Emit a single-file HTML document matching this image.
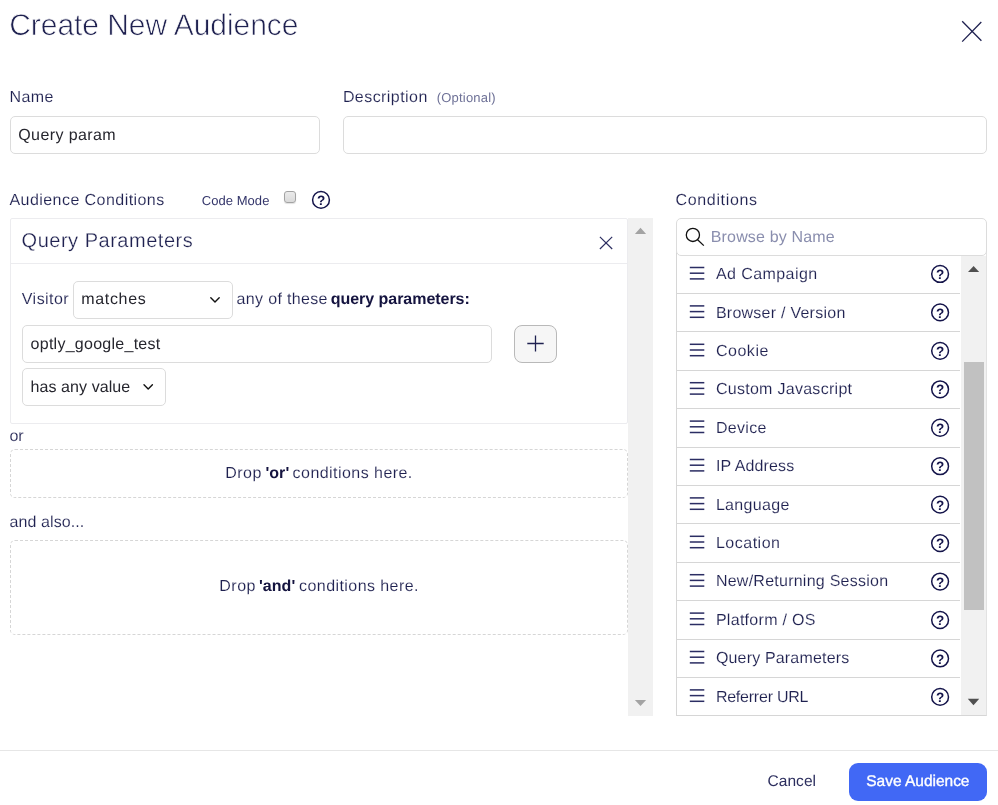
<!DOCTYPE html>
<html lang="en"><head><meta charset="utf-8"><title>Create New Audience</title>
<style>
html,body{margin:0;padding:0;background:#fff;}
body{text-rendering:geometricPrecision;width:998px;height:805px;position:relative;overflow:hidden;font-family:"Liberation Sans",sans-serif;}
.t{position:absolute;white-space:pre;}
.b{position:absolute;box-sizing:border-box;}
svg{position:absolute;overflow:visible;}
#L{position:absolute;left:0;top:0;width:998px;height:805px;will-change:transform;}
</style></head><body>
<div id="L">
<div class="b" style="left:10px;top:116px;width:310.00px;height:38.00px;border:1px solid #dcdcdc;border-radius:5px;background:#fff;"></div>
<div class="b" style="left:343px;top:116px;width:644.00px;height:38.00px;border:1px solid #dcdcdc;border-radius:5px;background:#fff;"></div>
<div class="b" style="left:284.3px;top:191.2px;width:11.90px;height:11.90px;border:1px solid #a3a3a3;border-radius:3px;background:linear-gradient(#ebebeb,#dadada);box-shadow:0 1px 1px rgba(0,0,0,.12);"></div>
<div class="b" style="left:10px;top:218px;width:618.00px;height:206.00px;border:1px solid #ececef;border-radius:2px;background:#fff;"></div>
<div class="b" style="left:11px;top:263px;width:616.00px;height:1.00px;background:#ececef;"></div>
<div class="b" style="left:73px;top:281px;width:160.00px;height:38.00px;border:1px solid #dcdcdc;border-radius:5px;background:#fff;"></div>
<div class="b" style="left:22px;top:325px;width:470.00px;height:38.00px;border:1px solid #dcdcdc;border-radius:5px;background:#fff;"></div>
<div class="b" style="left:514px;top:325px;width:43.00px;height:38.00px;border:1px solid #b9b9b9;border-radius:8px;background:#f6f6f6;"></div>
<div class="b" style="left:22px;top:368px;width:144.00px;height:38.00px;border:1px solid #dcdcdc;border-radius:5px;background:#fff;"></div>
<div class="b" style="left:628px;top:218px;width:25.00px;height:497.80px;background:#f1f1f1;"></div>
<div class="b" style="left:10px;top:449px;width:618.00px;height:49.00px;border:1px dashed #d6d6d6;border-radius:5px;background:#fff;"></div>
<div class="b" style="left:10px;top:540px;width:618.00px;height:95.00px;border:1px dashed #d6d6d6;border-radius:5px;background:#fff;"></div>
<div class="b" style="left:676px;top:250px;width:311.00px;height:466.20px;border:1px solid #d6d6d6;border-top:none;border-right-color:#e2e2e2;background:#fff;"></div>
<div class="b" style="left:676px;top:218px;width:311.00px;height:38.00px;border:1px solid #dcdcdc;border-radius:5px;background:#fff;"></div>
<div class="b" style="left:961px;top:255.8px;width:25.00px;height:459.40px;background:#f1f1f1;"></div>
<div class="b" style="left:963.6px;top:362.2px;width:20.00px;height:248.20px;background:#c1c1c1;"></div>
<div class="b" style="left:677px;top:293px;width:283.40px;height:1.00px;background:#d6d6d6;"></div>
<div class="b" style="left:677px;top:331px;width:283.40px;height:1.00px;background:#d6d6d6;"></div>
<div class="b" style="left:677px;top:370px;width:283.40px;height:1.00px;background:#d6d6d6;"></div>
<div class="b" style="left:677px;top:408px;width:283.40px;height:1.00px;background:#d6d6d6;"></div>
<div class="b" style="left:677px;top:447px;width:283.40px;height:1.00px;background:#d6d6d6;"></div>
<div class="b" style="left:677px;top:485px;width:283.40px;height:1.00px;background:#d6d6d6;"></div>
<div class="b" style="left:677px;top:523px;width:283.40px;height:1.00px;background:#d6d6d6;"></div>
<div class="b" style="left:677px;top:562px;width:283.40px;height:1.00px;background:#d6d6d6;"></div>
<div class="b" style="left:677px;top:600px;width:283.40px;height:1.00px;background:#d6d6d6;"></div>
<div class="b" style="left:677px;top:639px;width:283.40px;height:1.00px;background:#d6d6d6;"></div>
<div class="b" style="left:677px;top:677px;width:283.40px;height:1.00px;background:#d6d6d6;"></div>
<div class="b" style="left:0px;top:749.5px;width:998.00px;height:1.00px;background:#e6e6e6;"></div>
<div class="b" style="left:848.8px;top:762.8px;width:138.40px;height:38.20px;background:#4168f5;border-radius:9px;"></div>
<svg style="left:0;top:0" width="998" height="805" viewBox="0 0 998 805"><path d="M962.2 21.2 L981.4 40.7 M981.3 22.0 L962.2 41.6" stroke="#1f2150" stroke-width="1.3" fill="none"/><path d="M599.9 236.9 L612.2 249.0 M612.2 236.9 L599.9 249.0" stroke="#2d2f62" stroke-width="1.2" fill="none"/><path d="M210.8 297.8 L215 302.0 L219.2 297.8" stroke="#111" stroke-width="1.4" fill="none" stroke-linecap="round" stroke-linejoin="round"/><path d="M144.0 384.8 L148.2 389.0 L152.39999999999998 384.8" stroke="#111" stroke-width="1.4" fill="none" stroke-linecap="round" stroke-linejoin="round"/><path d="M527.3 343.5 H543.7 M535.5 335.4 V351.6" stroke="#1f2150" stroke-width="1.3" fill="none"/><circle cx="321" cy="199.9" r="8.4" stroke="#14144a" stroke-width="1.5" fill="#fff"/><text x="321" y="205.00" text-anchor="middle" font-family="Liberation Sans, sans-serif" font-weight="700" font-size="13.5" fill="#14144a">?</text><circle cx="940.1" cy="273.95" r="8.4" stroke="#14144a" stroke-width="1.5" fill="#fff"/><text x="940.1" y="279.05" text-anchor="middle" font-family="Liberation Sans, sans-serif" font-weight="700" font-size="13.5" fill="#14144a">?</text><circle cx="940.1" cy="312.4" r="8.4" stroke="#14144a" stroke-width="1.5" fill="#fff"/><text x="940.1" y="317.50" text-anchor="middle" font-family="Liberation Sans, sans-serif" font-weight="700" font-size="13.5" fill="#14144a">?</text><circle cx="940.1" cy="350.85" r="8.4" stroke="#14144a" stroke-width="1.5" fill="#fff"/><text x="940.1" y="355.95" text-anchor="middle" font-family="Liberation Sans, sans-serif" font-weight="700" font-size="13.5" fill="#14144a">?</text><circle cx="940.1" cy="389.3" r="8.4" stroke="#14144a" stroke-width="1.5" fill="#fff"/><text x="940.1" y="394.40" text-anchor="middle" font-family="Liberation Sans, sans-serif" font-weight="700" font-size="13.5" fill="#14144a">?</text><circle cx="940.1" cy="427.75" r="8.4" stroke="#14144a" stroke-width="1.5" fill="#fff"/><text x="940.1" y="432.85" text-anchor="middle" font-family="Liberation Sans, sans-serif" font-weight="700" font-size="13.5" fill="#14144a">?</text><circle cx="940.1" cy="466.2" r="8.4" stroke="#14144a" stroke-width="1.5" fill="#fff"/><text x="940.1" y="471.30" text-anchor="middle" font-family="Liberation Sans, sans-serif" font-weight="700" font-size="13.5" fill="#14144a">?</text><circle cx="940.1" cy="504.65" r="8.4" stroke="#14144a" stroke-width="1.5" fill="#fff"/><text x="940.1" y="509.75" text-anchor="middle" font-family="Liberation Sans, sans-serif" font-weight="700" font-size="13.5" fill="#14144a">?</text><circle cx="940.1" cy="543.1" r="8.4" stroke="#14144a" stroke-width="1.5" fill="#fff"/><text x="940.1" y="548.20" text-anchor="middle" font-family="Liberation Sans, sans-serif" font-weight="700" font-size="13.5" fill="#14144a">?</text><circle cx="940.1" cy="581.55" r="8.4" stroke="#14144a" stroke-width="1.5" fill="#fff"/><text x="940.1" y="586.65" text-anchor="middle" font-family="Liberation Sans, sans-serif" font-weight="700" font-size="13.5" fill="#14144a">?</text><circle cx="940.1" cy="620.0" r="8.4" stroke="#14144a" stroke-width="1.5" fill="#fff"/><text x="940.1" y="625.10" text-anchor="middle" font-family="Liberation Sans, sans-serif" font-weight="700" font-size="13.5" fill="#14144a">?</text><circle cx="940.1" cy="658.45" r="8.4" stroke="#14144a" stroke-width="1.5" fill="#fff"/><text x="940.1" y="663.55" text-anchor="middle" font-family="Liberation Sans, sans-serif" font-weight="700" font-size="13.5" fill="#14144a">?</text><circle cx="940.1" cy="696.9000000000001" r="8.4" stroke="#14144a" stroke-width="1.5" fill="#fff"/><text x="940.1" y="702.00" text-anchor="middle" font-family="Liberation Sans, sans-serif" font-weight="700" font-size="13.5" fill="#14144a">?</text><rect x="689.8" y="266.75" width="14.5" height="1.5" fill="#2b2d63"/><rect x="689.8" y="272.45" width="14.5" height="1.5" fill="#2b2d63"/><rect x="689.8" y="278.15" width="14.5" height="1.5" fill="#2b2d63"/><rect x="689.8" y="305.15" width="14.5" height="1.5" fill="#2b2d63"/><rect x="689.8" y="310.85" width="14.5" height="1.5" fill="#2b2d63"/><rect x="689.8" y="316.55" width="14.5" height="1.5" fill="#2b2d63"/><rect x="689.8" y="343.55" width="14.5" height="1.5" fill="#2b2d63"/><rect x="689.8" y="349.25" width="14.5" height="1.5" fill="#2b2d63"/><rect x="689.8" y="354.95" width="14.5" height="1.5" fill="#2b2d63"/><rect x="689.8" y="381.95" width="14.5" height="1.5" fill="#2b2d63"/><rect x="689.8" y="387.65" width="14.5" height="1.5" fill="#2b2d63"/><rect x="689.8" y="393.35" width="14.5" height="1.5" fill="#2b2d63"/><rect x="689.8" y="420.35" width="14.5" height="1.5" fill="#2b2d63"/><rect x="689.8" y="426.05" width="14.5" height="1.5" fill="#2b2d63"/><rect x="689.8" y="431.75" width="14.5" height="1.5" fill="#2b2d63"/><rect x="689.8" y="458.75" width="14.5" height="1.5" fill="#2b2d63"/><rect x="689.8" y="464.45" width="14.5" height="1.5" fill="#2b2d63"/><rect x="689.8" y="470.15" width="14.5" height="1.5" fill="#2b2d63"/><rect x="689.8" y="497.15" width="14.5" height="1.5" fill="#2b2d63"/><rect x="689.8" y="502.85" width="14.5" height="1.5" fill="#2b2d63"/><rect x="689.8" y="508.55" width="14.5" height="1.5" fill="#2b2d63"/><rect x="689.8" y="535.55" width="14.5" height="1.5" fill="#2b2d63"/><rect x="689.8" y="541.25" width="14.5" height="1.5" fill="#2b2d63"/><rect x="689.8" y="546.95" width="14.5" height="1.5" fill="#2b2d63"/><rect x="689.8" y="573.95" width="14.5" height="1.5" fill="#2b2d63"/><rect x="689.8" y="579.65" width="14.5" height="1.5" fill="#2b2d63"/><rect x="689.8" y="585.35" width="14.5" height="1.5" fill="#2b2d63"/><rect x="689.8" y="612.35" width="14.5" height="1.5" fill="#2b2d63"/><rect x="689.8" y="618.05" width="14.5" height="1.5" fill="#2b2d63"/><rect x="689.8" y="623.75" width="14.5" height="1.5" fill="#2b2d63"/><rect x="689.8" y="650.75" width="14.5" height="1.5" fill="#2b2d63"/><rect x="689.8" y="656.45" width="14.5" height="1.5" fill="#2b2d63"/><rect x="689.8" y="662.15" width="14.5" height="1.5" fill="#2b2d63"/><rect x="689.8" y="689.15" width="14.5" height="1.5" fill="#2b2d63"/><rect x="689.8" y="694.85" width="14.5" height="1.5" fill="#2b2d63"/><rect x="689.8" y="700.55" width="14.5" height="1.5" fill="#2b2d63"/><circle cx="692.9" cy="234.9" r="6.6" stroke="#111" stroke-width="1.3" fill="none"/><path d="M697.6 239.7 L703.8 245.6" stroke="#111" stroke-width="1.3" fill="none"/><path d="M634.9 234 L646.1 234 L640.5 227.8 Z" fill="#a3a3a3"/><path d="M634.9 699.9 L646.1 699.9 L640.5 706.1 Z" fill="#a3a3a3"/><path d="M968 272 L979.2 272 L973.6 266 Z" fill="#505050"/><path d="M967.8 698.8 L979.2 698.8 L973.5 705.2 Z" fill="#505050"/></svg>
<span class="t" style="left:9.25px;top:11.00px;font-size:30px;line-height:30px;color:#1f2150;-webkit-text-stroke:0.7px #fff;letter-spacing:-0.054px;">Create New Audience</span>
<span class="t" style="left:9.48px;top:90.00px;font-size:16px;line-height:16px;color:#1f2150;-webkit-text-stroke:0.12px #fff;letter-spacing:0.417px;">Name</span>
<span class="t" style="left:342.88px;top:90.00px;font-size:16px;line-height:16px;color:#1f2150;-webkit-text-stroke:0.12px #fff;letter-spacing:0.441px;">Description</span>
<span class="t" style="left:436.81px;top:91.00px;font-size:13px;line-height:13px;color:#6d7096;letter-spacing:0.188px;">(Optional)</span>
<span class="t" style="left:18.28px;top:128.00px;font-size:16px;line-height:16px;color:#26262e;letter-spacing:0.406px;">Query param</span>
<span class="t" style="left:9.48px;top:193.00px;font-size:16px;line-height:16px;color:#1f2150;-webkit-text-stroke:0.12px #fff;letter-spacing:0.443px;">Audience Conditions</span>
<span class="t" style="left:201.81px;top:194.00px;font-size:13px;line-height:13px;color:#33356a;letter-spacing:0.044px;">Code Mode</span>
<span class="t" style="left:21.60px;top:231.00px;font-size:20px;line-height:20px;color:#1f2150;-webkit-text-stroke:0.25px #fff;letter-spacing:0.514px;">Query Parameters</span>
<span class="t" style="left:21.78px;top:292.00px;font-size:16px;line-height:16px;color:#1f2150;-webkit-text-stroke:0.12px #fff;letter-spacing:0.461px;">Visitor</span>
<span class="t" style="left:81.28px;top:292.00px;font-size:16px;line-height:16px;color:#26262e;letter-spacing:0.662px;">matches</span>
<span class="t" style="left:236.58px;top:292.00px;font-size:16px;line-height:16px;color:#1f2150;-webkit-text-stroke:0.12px #fff;letter-spacing:0.333px;">any of these</span>
<span class="t" style="left:330.78px;top:292.00px;font-size:16px;line-height:16px;color:#14133f;font-weight:700;letter-spacing:-0.037px;">query parameters:</span>
<span class="t" style="left:30.58px;top:337.00px;font-size:16px;line-height:16px;color:#26262e;letter-spacing:0.263px;">optly_google_test</span>
<span class="t" style="left:30.58px;top:380.00px;font-size:16px;line-height:16px;color:#26262e;letter-spacing:0.075px;">has any value</span>
<span class="t" style="left:9.48px;top:429.00px;font-size:16px;line-height:16px;color:#1f2150;-webkit-text-stroke:0.12px #fff;">or</span>
<span class="t" style="left:9.48px;top:515.00px;font-size:16px;line-height:16px;color:#1f2150;-webkit-text-stroke:0.12px #fff;letter-spacing:0.101px;">and also...</span>
<span class="t" style="left:675.58px;top:193.00px;font-size:16px;line-height:16px;color:#1f2150;-webkit-text-stroke:0.12px #fff;letter-spacing:0.648px;">Conditions</span>
<span class="t" style="left:710.78px;top:230.00px;font-size:16px;line-height:16px;color:#8a8eae;letter-spacing:0.162px;">Browse by Name</span>
<span class="t" style="left:767.60px;top:774.00px;font-size:15.5px;line-height:15.5px;color:#2c2e5e;letter-spacing:0.029px;">Cancel</span>
<span class="t" style="left:866.30px;top:774.00px;font-size:15.5px;line-height:15.5px;color:#ffffff;-webkit-text-stroke:0.35px #ffffff;letter-spacing:-0.019px;">Save Audience</span>
<span class="t" style="left:715.88px;top:267.00px;font-size:16px;line-height:16px;color:#1f2150;-webkit-text-stroke:0.12px #fff;letter-spacing:0.429px;">Ad Campaign</span>
<span class="t" style="left:715.88px;top:306.00px;font-size:16px;line-height:16px;color:#1f2150;-webkit-text-stroke:0.12px #fff;letter-spacing:0.253px;">Browser / Version</span>
<span class="t" style="left:715.88px;top:344.00px;font-size:16px;line-height:16px;color:#1f2150;-webkit-text-stroke:0.12px #fff;letter-spacing:0.546px;">Cookie</span>
<span class="t" style="left:715.88px;top:382.00px;font-size:16px;line-height:16px;color:#1f2150;-webkit-text-stroke:0.12px #fff;letter-spacing:0.284px;">Custom Javascript</span>
<span class="t" style="left:715.88px;top:421.00px;font-size:16px;line-height:16px;color:#1f2150;-webkit-text-stroke:0.12px #fff;letter-spacing:0.327px;">Device</span>
<span class="t" style="left:715.88px;top:459.00px;font-size:16px;line-height:16px;color:#1f2150;-webkit-text-stroke:0.12px #fff;letter-spacing:0.138px;">IP Address</span>
<span class="t" style="left:715.88px;top:498.00px;font-size:16px;line-height:16px;color:#1f2150;-webkit-text-stroke:0.12px #fff;letter-spacing:0.322px;">Language</span>
<span class="t" style="left:715.88px;top:536.00px;font-size:16px;line-height:16px;color:#1f2150;-webkit-text-stroke:0.12px #fff;letter-spacing:0.520px;">Location</span>
<span class="t" style="left:715.88px;top:574.00px;font-size:16px;line-height:16px;color:#1f2150;-webkit-text-stroke:0.12px #fff;letter-spacing:0.252px;">New/Returning Session</span>
<span class="t" style="left:715.88px;top:613.00px;font-size:16px;line-height:16px;color:#1f2150;-webkit-text-stroke:0.12px #fff;letter-spacing:0.292px;">Platform / OS</span>
<span class="t" style="left:715.88px;top:651.00px;font-size:16px;line-height:16px;color:#1f2150;-webkit-text-stroke:0.12px #fff;letter-spacing:0.175px;">Query Parameters</span>
<span class="t" style="left:715.88px;top:690.00px;font-size:16px;line-height:16px;color:#1f2150;-webkit-text-stroke:0.12px #fff;letter-spacing:-0.227px;">Referrer URL</span>
<span class="t" style="left:225.28px;top:466.00px;font-size:16px;line-height:16px;color:#1f2150;-webkit-text-stroke:0.12px #fff;letter-spacing:0.451px;">Drop</span>
<span class="t" style="left:265.38px;top:466.00px;font-size:16px;line-height:16px;color:#14133f;font-weight:700;letter-spacing:0.077px;">'or'</span>
<span class="t" style="left:292.58px;top:466.00px;font-size:16px;line-height:16px;color:#1f2150;-webkit-text-stroke:0.12px #fff;letter-spacing:0.451px;">conditions here.</span>
<span class="t" style="left:219.28px;top:579.00px;font-size:16px;line-height:16px;color:#1f2150;-webkit-text-stroke:0.12px #fff;letter-spacing:0.517px;">Drop</span>
<span class="t" style="left:258.88px;top:579.00px;font-size:16px;line-height:16px;color:#14133f;font-weight:700;letter-spacing:0.069px;">'and'</span>
<span class="t" style="left:299.08px;top:579.00px;font-size:16px;line-height:16px;color:#1f2150;-webkit-text-stroke:0.12px #fff;letter-spacing:0.425px;">conditions here.</span>
</div>
</body></html>
